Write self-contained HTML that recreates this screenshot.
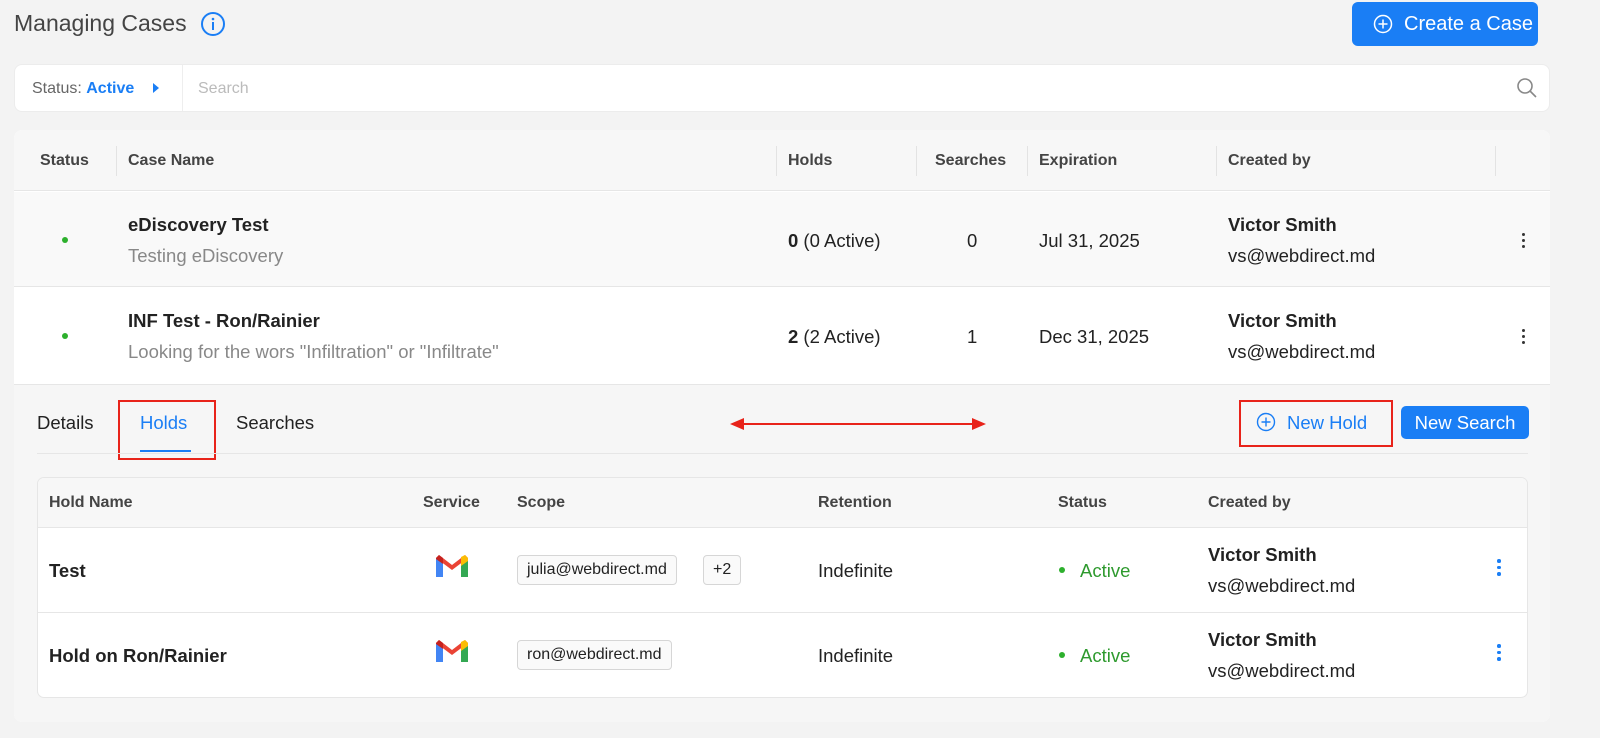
<!DOCTYPE html>
<html><head><style>
*{box-sizing:border-box;margin:0;padding:0}
body{width:1600px;height:738px;background:#f3f3f3;font-family:"Liberation Sans",sans-serif;color:#222;position:relative;overflow:hidden}
.a{position:absolute;white-space:nowrap}
.h{font-weight:bold;font-size:16px;color:#444}
.t{font-size:18.5px}
.div{position:absolute;width:1px;background:#e3e3e3}
.tag{position:absolute;border:1px solid #d6d6d6;border-radius:4px;background:#fafafa;font-size:16px;padding:0 9px;height:30px;line-height:28px}
.dots{position:absolute;width:3px}
.dots i{display:block;width:3px;height:3px;border-radius:50%;background:#333;margin-bottom:3px}
.dots.b i{background:#1a7ef5;width:3.5px;height:3.5px}
</style></head><body>
<div class="a" style="left:14px;top:10px;font-size:23px;color:#444">Managing Cases</div>
<svg class="a" style="left:200px;top:11px" width="26" height="26" viewBox="0 0 26 26"><circle cx="13" cy="13" r="11" fill="none" stroke="#1a7ef5" stroke-width="2"/><rect x="12" y="11" width="2" height="8" fill="#1a7ef5"/><circle cx="13" cy="8" r="1.3" fill="#1a7ef5"/></svg>
<div class="a" style="left:1352px;top:2px;width:186px;height:44px;background:#1a7ef5;border-radius:6px;color:#fff;font-size:20px;line-height:44px;padding-left:52px">Create a Case</div>
<svg class="a" style="left:1373px;top:14px" width="20" height="20" viewBox="0 0 20 20"><circle cx="10" cy="10" r="8.5" fill="none" stroke="#fff" stroke-width="1.5"/><path d="M10 5.5v9M5.5 10h9" stroke="#fff" stroke-width="1.5"/></svg>

<div class="a" style="left:14px;top:64px;width:1536px;height:48px;background:#fff;border-radius:8px;border:1px solid #ececec"></div>
<div class="a" style="left:32px;top:80px;font-size:16px;color:#666">Status: <span style="color:#1a7ef5;font-weight:bold">Active</span></div>
<svg class="a" style="left:152px;top:82px" width="8" height="12"><path d="M1 1l6 5-6 5z" fill="#1a7ef5"/></svg>
<div class="div" style="left:182px;top:65px;height:46px;background:#eee"></div>
<div class="a" style="left:198px;top:80px;font-size:16px;color:#bbb">Search</div>
<svg class="a" style="left:1516px;top:77px" width="22" height="22" viewBox="0 0 22 22"><circle cx="9" cy="9" r="7" fill="none" stroke="#888" stroke-width="1.6"/><path d="M14 14l6 6" stroke="#888" stroke-width="1.6"/></svg>

<div class="a" style="left:14px;top:130px;width:1536px;height:592px;background:#fff;border-radius:8px;overflow:hidden">
 <div class="a" style="left:0;top:0;width:1536px;height:61px;background:#f7f7f7;border-bottom:1px solid #e6e6e6"></div>
 <div class="a" style="left:0;top:62px;width:1536px;height:95px;background:#f9f9f9;border-bottom:1px solid #e6e6e6"></div>
 <div class="a" style="left:0;top:254px;width:1536px;height:338px;background:#f6f6f6;border-top:1px solid #e6e6e6"></div>
</div>
<div class="a h" style="left:40px;top:152px">Status</div>
<div class="a h" style="left:128px;top:152px">Case Name</div>
<div class="a h" style="left:788px;top:152px">Holds</div>
<div class="a h" style="left:935px;top:152px">Searches</div>
<div class="a h" style="left:1039px;top:152px">Expiration</div>
<div class="a h" style="left:1228px;top:152px">Created by</div>
<div class="div" style="left:116px;top:146px;height:30px"></div>
<div class="div" style="left:776px;top:146px;height:30px"></div>
<div class="div" style="left:916px;top:146px;height:30px"></div>
<div class="div" style="left:1027px;top:146px;height:30px"></div>
<div class="div" style="left:1216px;top:146px;height:30px"></div>
<div class="div" style="left:1495px;top:146px;height:30px"></div>

<div class="a" style="left:62px;top:237px;width:6px;height:6px;border-radius:50%;background:#2db02d"></div>
<div class="a t" style="left:128px;top:214px;font-weight:bold">eDiscovery Test</div>
<div class="a t" style="left:128px;top:245px;color:#888">Testing eDiscovery</div>
<div class="a t" style="left:788px;top:230px"><b>0</b> (0 Active)</div>
<div class="a t" style="left:967px;top:230px">0</div>
<div class="a t" style="left:1039px;top:230px">Jul 31, 2025</div>
<div class="a t" style="left:1228px;top:214px;font-weight:bold">Victor Smith</div>
<div class="a t" style="left:1228px;top:245px">vs@webdirect.md</div>
<div class="dots" style="left:1522px;top:233px"><i></i><i></i><i></i></div>

<div class="a" style="left:62px;top:333px;width:6px;height:6px;border-radius:50%;background:#2db02d"></div>
<div class="a t" style="left:128px;top:310px;font-weight:bold">INF Test - Ron/Rainier</div>
<div class="a t" style="left:128px;top:341px;color:#888">Looking for the wors "Infiltration" or "Infiltrate"</div>
<div class="a t" style="left:788px;top:326px"><b>2</b> (2 Active)</div>
<div class="a t" style="left:967px;top:326px">1</div>
<div class="a t" style="left:1039px;top:326px">Dec 31, 2025</div>
<div class="a t" style="left:1228px;top:310px;font-weight:bold">Victor Smith</div>
<div class="a t" style="left:1228px;top:341px">vs@webdirect.md</div>
<div class="dots" style="left:1522px;top:329px"><i></i><i></i><i></i></div>

<div class="a t" style="left:37px;top:412px">Details</div>
<div class="a t" style="left:140px;top:412px;color:#1a7ef5">Holds</div>
<div class="a" style="left:140px;top:450px;width:51px;height:2px;background:#1a7ef5"></div>
<div class="a" style="left:118px;top:400px;width:98px;height:60px;border:2px solid #e8231a"></div>
<div class="a t" style="left:236px;top:412px">Searches</div>
<div class="a" style="left:37px;top:453px;width:1491px;height:1px;background:#e6e6e6"></div>
<svg class="a" style="left:728px;top:414px" width="260" height="20"><path d="M12 10h236" stroke="#e8231a" stroke-width="2"/><path d="M2 10l14-6v12z M258 10l-14-6v12z" fill="#e8231a"/></svg>
<div class="a" style="left:1239px;top:400px;width:154px;height:47px;border:2px solid #e8231a"></div>
<svg class="a" style="left:1256px;top:412px" width="20" height="20" viewBox="0 0 20 20"><circle cx="10" cy="10" r="8.5" fill="none" stroke="#1a7ef5" stroke-width="1.4"/><path d="M10 5.5v9M5.5 10h9" stroke="#1a7ef5" stroke-width="1.4"/></svg>
<div class="a t" style="left:1287px;top:412px;color:#1a7ef5">New Hold</div>
<div class="a t" style="left:1401px;top:406px;width:128px;height:33px;background:#1a7ef5;border-radius:5px;color:#fff;line-height:33px;text-align:center">New Search</div>

<div class="a" style="left:37px;top:477px;width:1491px;height:221px;background:#fff;border:1px solid #e6e6e6;border-radius:7px;overflow:hidden">
 <div class="a" style="left:0;top:0;width:1491px;height:50px;background:#f7f7f7;border-bottom:1px solid #e6e6e6"></div>
 <div class="a" style="left:0;top:134px;width:1491px;height:1px;background:#e6e6e6"></div>
</div>
<div class="a h" style="left:49px;top:494px">Hold Name</div>
<div class="a h" style="left:423px;top:494px">Service</div>
<div class="a h" style="left:517px;top:494px">Scope</div>
<div class="a h" style="left:818px;top:494px">Retention</div>
<div class="a h" style="left:1058px;top:494px">Status</div>
<div class="a h" style="left:1208px;top:494px">Created by</div>

<div class="a t" style="left:49px;top:560px;font-weight:bold">Test</div>
<svg class="a" style="left:434px;top:553px" width="36" height="26" viewBox="0 0 36 26"><path d="M2 5v19h7V11z" fill="#4285f4"/><path d="M27 11v13h7V5z" fill="#34a853"/><path d="M2 5l16 12 16-12-3-3-13 10L5 2z" fill="#ea4335"/><path d="M27 4l4-2 3 3v3l-7 5z" fill="#fbbc04"/><path d="M2 5l3-3 4 3v6L2 6z" fill="#c5221f"/></svg>
<div class="tag" style="left:517px;top:555px">julia@webdirect.md</div>
<div class="tag" style="left:703px;top:555px">+2</div>
<div class="a t" style="left:818px;top:560px">Indefinite</div>
<div class="a" style="left:1059px;top:567px;width:6px;height:6px;border-radius:50%;background:#2db02d"></div>
<div class="a t" style="left:1080px;top:560px;color:#2e9a2e">Active</div>
<div class="a t" style="left:1208px;top:544px;font-weight:bold">Victor Smith</div>
<div class="a t" style="left:1208px;top:575px">vs@webdirect.md</div>
<div class="dots b" style="left:1497px;top:559px"><i></i><i></i><i></i></div>

<div class="a t" style="left:49px;top:645px;font-weight:bold">Hold on Ron/Rainier</div>
<svg class="a" style="left:434px;top:638px" width="36" height="26" viewBox="0 0 36 26"><path d="M2 5v19h7V11z" fill="#4285f4"/><path d="M27 11v13h7V5z" fill="#34a853"/><path d="M2 5l16 12 16-12-3-3-13 10L5 2z" fill="#ea4335"/><path d="M27 4l4-2 3 3v3l-7 5z" fill="#fbbc04"/><path d="M2 5l3-3 4 3v6L2 6z" fill="#c5221f"/></svg>
<div class="tag" style="left:517px;top:640px">ron@webdirect.md</div>
<div class="a t" style="left:818px;top:645px">Indefinite</div>
<div class="a" style="left:1059px;top:652px;width:6px;height:6px;border-radius:50%;background:#2db02d"></div>
<div class="a t" style="left:1080px;top:645px;color:#2e9a2e">Active</div>
<div class="a t" style="left:1208px;top:629px;font-weight:bold">Victor Smith</div>
<div class="a t" style="left:1208px;top:660px">vs@webdirect.md</div>
<div class="dots b" style="left:1497px;top:644px"><i></i><i></i><i></i></div>
</body></html>
